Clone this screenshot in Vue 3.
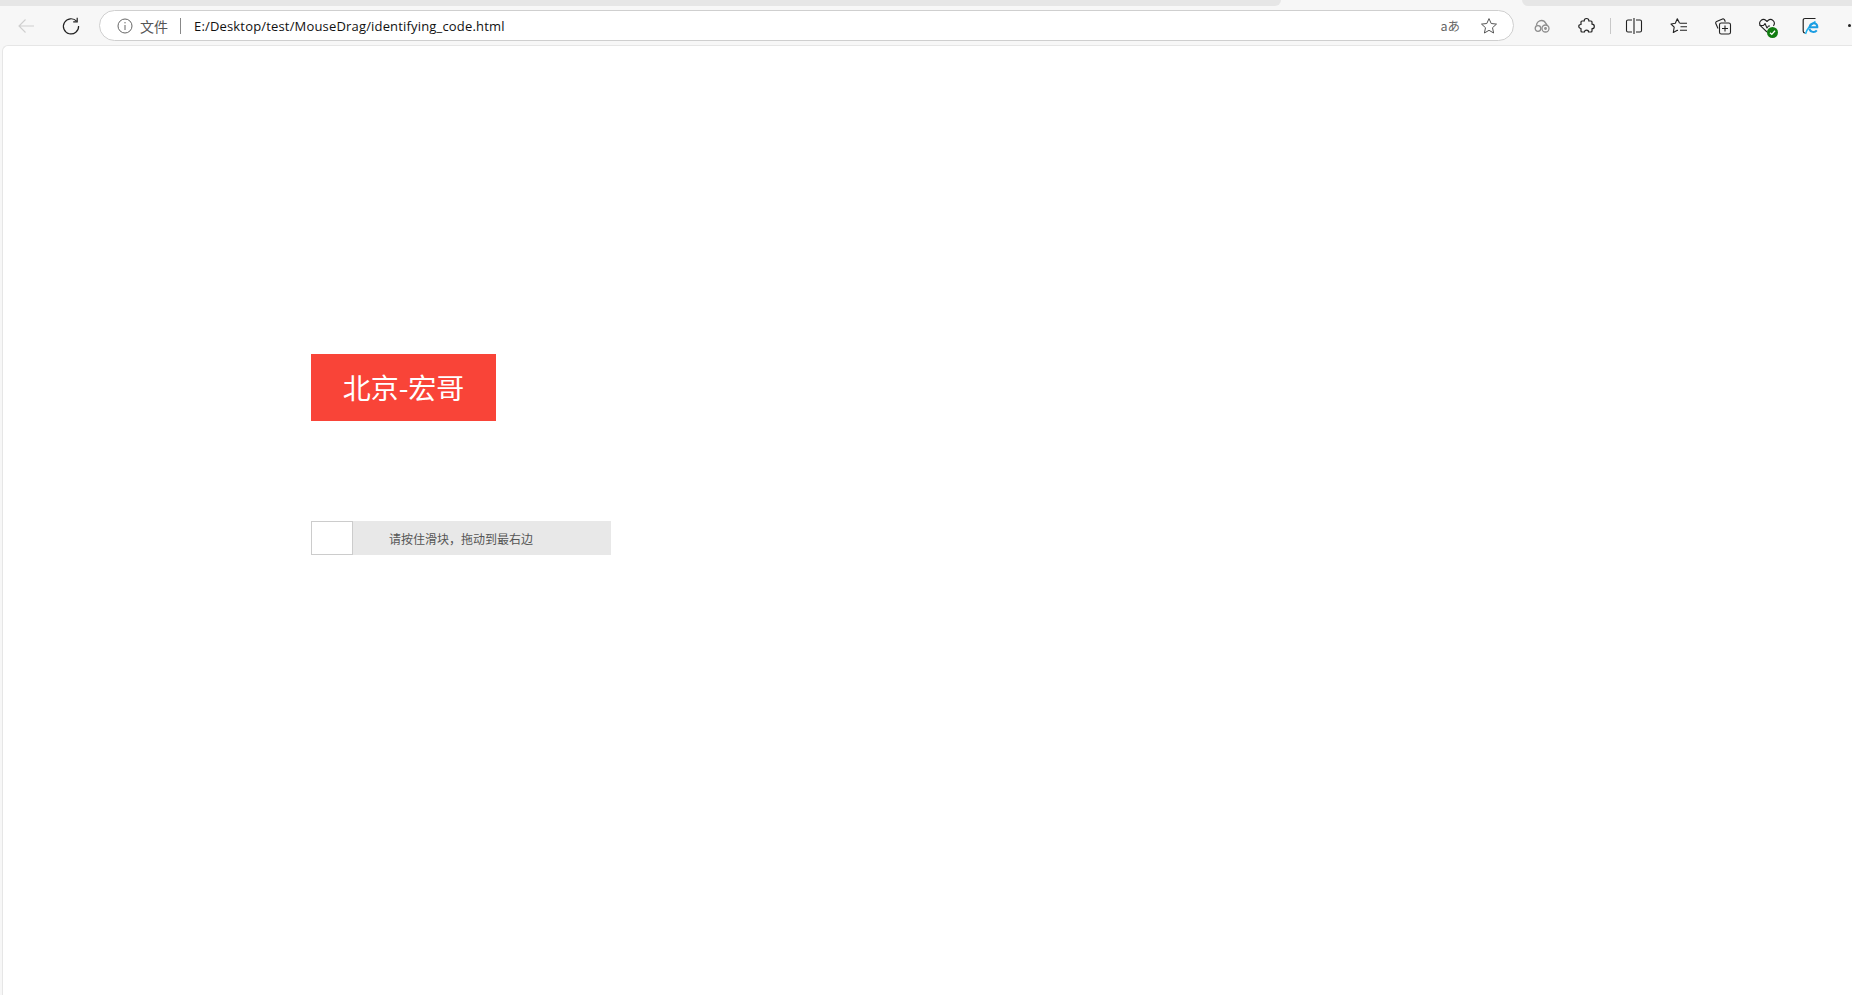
<script setup>
const url = 'E:/Desktop/test/MouseDrag/identifying_code.html'
</script>

<template>
  <div class="window">
    <div class="tabs">
      <div class="tab tab-a"></div>
      <div class="tab tab-b"></div>
    </div>
    <div class="toolbar">
      <svg class="ico back" width="20" height="20" viewBox="0 0 20 20" fill="none" stroke="#cfcfcf" stroke-width="1.1"><path d="M18 10H3M9.500 3.500 3 10l6.500 6.500"/></svg>
      <svg class="ico reload" width="20" height="20" viewBox="0 0 20 20" fill="none" stroke="#222" stroke-width="1.2"><path d="M15.600 5.200A7.600 7.600 0 1 0 17.600 10"/><path d="M16.200 1.800v4h-4"/></svg>
      <div class="address">
        <svg class="info" width="16" height="16" viewBox="0 0 16 16" fill="none" stroke="#666" stroke-width="1"><circle cx="8" cy="8" r="7"/><path d="M8 7v5M8 4v1.400"/></svg>
        <span class="file">文件</span>
        <span class="bar"></span>
        <span class="url">{{ url }}</span>
        <span class="translate">aあ</span>
        <svg class="star" width="18" height="18" viewBox="0 0 18 18" fill="none" stroke="#555" stroke-width="1" stroke-linejoin="round"><path d="M9 1.600 11.200 6.500l5.300.6-4 3.600 1.100 5.300L9 13.300 4.400 16l1.100-5.300-4-3.600 5.300-.6z"/></svg>
      </div>
      <svg class="tool cloud" width="18" height="18" viewBox="0 0 18 18" fill="none" stroke="#8d8d8d" stroke-width="1.300"><circle cx="5" cy="11.500" r="2.800"/><circle cx="12.500" cy="11.500" r="3.500"/><path d="M3.500 8.500c0-3 2.500-5 5-5 2.200 0 3.500 1.200 4 2.500l1.500 2"/><circle cx="12.500" cy="11.500" r=".8"/></svg>
      <svg class="tool puzzle" width="18" height="18" viewBox="0 0 18 18" fill="none" stroke="#222" stroke-width="1.200" stroke-linejoin="round"><path d="M9.500 1.500c1.500 0 2.500 1 2.300 2.500h2.200c.8 0 1 .5 1 1v2.200c1.500 0 2.300 1 2.300 2.200s-.8 2.300-2.300 2.300v2.300c0 .5-.3 1-1 1h-2.500c0-1-.8-1.800-2-1.800s-2 .8-2 1.800H5c-.7 0-1-.5-1-1v-2.500c-1.200 0-2.200-.8-2.200-2.200S2.800 7.500 4 7.500V5c0-.5.3-1 1-1h2.300c-.2-1.500.7-2.500 2.200-2.500z"/></svg>
      <span class="tool-sep"></span>
      <svg class="tool split" width="18" height="18" viewBox="0 0 18 18" fill="none" stroke="#222" stroke-width="1.100"><path d="M7 3H3a1.500 1.500 0 0 0-1.500 1.500v9A1.500 1.500 0 0 0 3 15h4M11 3h4a1.500 1.500 0 0 1 1.500 1.500v9A1.500 1.500 0 0 1 15 15h-4M9 1v16"/></svg>
      <svg class="tool fav" width="18" height="18" viewBox="0 0 18 18" fill="none" stroke="#222" stroke-width="1.100" stroke-linejoin="round"><path d="M9.500 6 7.300 1.800 5.300 6.300 1 7l3.200 3.200-.9 5.300 4-2.200.7.2"/><path d="M9.500 6.300H17M10.500 9.800H17M10 13.300h7"/></svg>
      <svg class="tool coll" width="18" height="18" viewBox="0 0 18 18" fill="none" stroke="#222" stroke-width="1.100" stroke-linejoin="round"><path d="M4 11.500 1.800 6.500a1.500 1.500 0 0 1 .8-2L8.500 2a1.500 1.500 0 0 1 2 .8l.8 2"/><rect x="5.500" y="6" width="11" height="11" rx="1.800"/><path d="M11 8.500v6M8 11.500h6"/></svg>
      <span class="tool heart-wrap">
        <svg width="18" height="18" viewBox="0 0 18 18" fill="none" stroke="#222" stroke-width="1.100" stroke-linejoin="round"><path d="M9 15 2.600 8.800A3.800 3.800 0 0 1 8 3.500l1 1 1-1a3.800 3.800 0 0 1 5.400 5.300"/><path d="M1.500 8.500h4l1.500-2 2 4.500 1.500-2h1.500"/></svg>
        <span class="ok">
          <svg width="9" height="9" viewBox="0 0 9 9" fill="none" stroke="#fff" stroke-width="1.300"><path d="M2 4.700 3.800 6.400 7 2.800"/></svg>
        </span>
      </span>
      <span class="tool ie-wrap">
        <svg width="20" height="20" viewBox="0 0 20 20" fill="none"><path d="M14.500 2.500H4A1.800 1.800 0 0 0 2.200 4.300v11A1.800 1.800 0 0 0 4 17" stroke="#222" stroke-width="1.200"/><path d="M4.500 18c1.500-5 5-9.500 10-12.500" stroke="#1fb2ee" stroke-width="1.500"/><path d="M16.300 11.300H8.800a3.800 3.800 0 0 1 7.500-1 5 5 0 0 1 0 1zM15.800 14.300a4.300 4.300 0 0 1-7.500-1.400" stroke="#1b9de2" stroke-width="2"/></svg>
      </span>
      <span class="dot"></span>
    </div>
    <div class="page">
      <div class="captcha">北京-宏哥</div>
      <div class="slider">
        <div class="handle"></div>
        <div class="hint">请按住滑块，拖动到最右边</div>
      </div>
    </div>
  </div>
</template>

<style>
html, body { margin: 0; background: #fff; overflow: hidden; }
</style>

<style scoped>
.window {
  width: 1852px;
  height: 995px;
  background: #f7f7f7;
  display: flex;
  flex-direction: column;
  overflow: hidden;
  font-family: "Open Sans", "Noto Sans CJK SC", sans-serif;
}
.tabs {
  height: 6px;
  display: flex;
  justify-content: space-between;
  flex: none;
}
.tab { background: #e6e6e6; height: 6px; }
.tab-a { width: 1281px; border-bottom-right-radius: 6px; }
.tab-b { width: 330px; border-bottom-left-radius: 6px; }
.toolbar {
  height: 39px;
  flex: none;
  display: flex;
  align-items: center;
  position: relative;
}
.ico, .tool { flex: none; }
.back { margin-left: 16px; }
.reload { margin-left: 25px; }
.address {
  margin-left: 18px;
  width: 1415px;
  height: 31px;
  box-sizing: border-box;
  flex: none;
  background: #fff;
  border: 1px solid #cfcfcf;
  border-radius: 16px;
  display: flex;
  align-items: center;
  padding-left: 17px;
}
.info { flex: none; }
.file {
  margin-left: 7px;
  width: 29px;
  font-size: 14px;
  color: #555;
  white-space: nowrap;
  font-family: "Noto Sans CJK SC", sans-serif;
}
.bar { width: 1px; height: 16px; background: #888; margin-left: 11px; }
.url {
  margin-left: 13px;
  font-size: 13px;
  color: #111;
  width: 311px;
  white-space: nowrap;
  letter-spacing: 0.17px;
}
.translate {
  margin-left: auto;
  font-size: 12.500px;
  color: #666;
  font-family: "Noto Sans CJK JP", sans-serif;
}
.star { margin-left: 20px; margin-right: 15px; flex: none; }
.cloud { margin-left: 19px; }
.puzzle { margin-left: 26px; }
.tool-sep { width: 1px; height: 16px; background: #c8c8c8; margin-left: 15px; }
.split { margin-left: 14px; }
.fav { margin-left: 27px; }
.coll { margin-left: 26px; }
.heart-wrap { margin-left: 26px; position: relative; width: 18px; height: 18px; display: block; }
.ok {
  position: absolute;
  right: -2px;
  bottom: -3px;
  width: 11px;
  height: 11px;
  border-radius: 50%;
  background: #107c10;
  display: flex;
  align-items: center;
  justify-content: center;
}
.ie-wrap { margin-left: 25px; width: 20px; height: 20px; display: block; }
.dot {
  width: 3px;
  height: 3px;
  border-radius: 50%;
  background: #222;
  flex: none;
  margin-left: 27px;
}
.page {
  flex: 1;
  background: #fff;
  border-top: 1px solid #e6e6e6;
  border-left: 1px solid #e6e6e6;
  margin-left: 2px;
  border-top-left-radius: 6px;
  padding: 308px 0 0 308px;
}
.captcha {
  width: 185px;
  height: 67px;
  background: #f94438;
  color: #fff;
  font-size: 28px;
  line-height: 67px;
  text-align: center;
  font-family: "Noto Sans CJK SC", sans-serif;
}
.slider {
  margin-top: 100px;
  width: 300px;
  height: 34px;
  background: #e8e8e8;
  position: relative;
  display: flex;
  align-items: center;
  justify-content: center;
}
.handle {
  position: absolute;
  left: 0;
  top: 0;
  width: 42px;
  height: 34px;
  box-sizing: border-box;
  background: #fff;
  border: 1px solid #ccc;
}
.hint {
  font-size: 12px;
  color: #555;
  font-family: "Noto Sans CJK SC", sans-serif;
}
</style>
